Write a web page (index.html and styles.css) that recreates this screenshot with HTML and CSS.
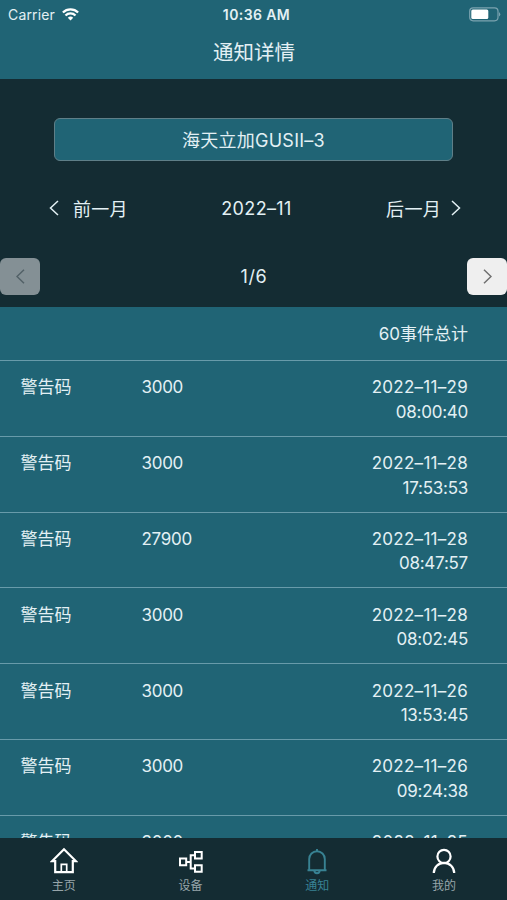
FILE: index.html
```html
<!DOCTYPE html>
<html lang="zh-CN">
<head>
<meta charset="utf-8">
<title>通知详情</title>
<link rel="stylesheet" href="styles.css">
</head>
<body>
<div class="app">
  <header class="header">
    <div class="status">
      <div class="carrier"><span class="carrier-name">Carrier</span>
        <svg width="17" height="13" viewBox="0 0 17 13" fill="none" stroke="#fff" stroke-width="2.3"><path d="M.9 4.5a10.8 10.8 0 0 1 15.2 0M3.5 7.5a7 7 0 0 1 10 0"/><path d="M8.5 12.5 5.8 9.8a3.8 3.8 0 0 1 5.4 0z" fill="#fff" stroke="none"/></svg>
      </div>
      <span class="time">10:36 AM</span>
      <svg class="battery" width="32" height="15" viewBox="0 0 32 15"><rect x=".7" y=".8" width="28.3" height="13" rx="3.5" fill="none" stroke="#7ba3b0" stroke-width="1.2"/><rect x="2.3" y="2.5" width="17" height="9.6" rx="1.5" fill="#fff"/><path d="M30 5q2.6 2.3 0 4.6z" fill="#7ba3b0"/></svg>
    </div>
    <h1 class="title">通知详情</h1>
  </header>
  <section class="controls">
    <div class="device">海天立加GUSII–3</div>
    <div class="months">
      <span class="month prev"><svg width="10" height="16" viewBox="0 0 10 16"><path d="M9 1 1.5 8 9 15"/></svg><span>前一月</span></span>
      <span class="current">2022–11</span>
      <span class="month next"><span>后一月</span><svg width="10" height="16" viewBox="0 0 10 16"><path d="M1 1 8.5 8 1 15"/></svg></span>
    </div>
    <div class="pager">
      <span class="page-btn disabled"><svg width="9" height="15" viewBox="0 0 9 15"><path d="M8 .8 1 7.5 8 14.2"/></svg></span>
      <span class="page">1/6</span>
      <span class="page-btn"><svg width="9" height="15" viewBox="0 0 9 15"><path d="M1 .8 8 7.5 1 14.2"/></svg></span>
    </div>
  </section>
  <main class="list">
    <div class="total"><span>60事件总计</span></div>
    <div class="row"><span>警告码</span><span class="code">3000</span><span class="when"><span class="date">2022–11–29</span><span class="clock">08:00:40</span></span></div>
    <div class="row"><span>警告码</span><span class="code">3000</span><span class="when"><span class="date">2022–11–28</span><span class="clock">17:53:53</span></span></div>
    <div class="row"><span>警告码</span><span class="code">27900</span><span class="when"><span class="date">2022–11–28</span><span class="clock">08:47:57</span></span></div>
    <div class="row"><span>警告码</span><span class="code">3000</span><span class="when"><span class="date">2022–11–28</span><span class="clock">08:02:45</span></span></div>
    <div class="row"><span>警告码</span><span class="code">3000</span><span class="when"><span class="date">2022–11–26</span><span class="clock">13:53:45</span></span></div>
    <div class="row"><span>警告码</span><span class="code">3000</span><span class="when"><span class="date">2022–11–26</span><span class="clock">09:24:38</span></span></div>
    <div class="row"><span>警告码</span><span class="code">3000</span><span class="when"><span class="date">2022–11–25</span></span></div>
  </main>
  <nav class="tabs">
    <div class="tab"><svg width="28" height="28" viewBox="0 0 28 28"><path d="M2 14.2 14 2.3l12 11.9h-3.2v11H5.2v-11z"/><path d="M11.3 25v-7.7h5.4V25" stroke-width="1.7"/></svg><span>主页</span></div>
    <div class="tab"><svg width="28" height="28" viewBox="0 0 28 28"><path d="M3 11.5h6.2v6.8H3zM18 5h6.7v6.5H18zM18 18.3h6.7v6.5H18zM9.2 15h4.5M18 8.2h-4.3v13.4H18" stroke-width="2"/></svg><span>设备</span></div>
    <div class="tab active"><svg width="28" height="28" viewBox="0 0 28 28"><path d="M14 2v2.2M4.5 23.2h19M6.2 23V12a7.8 7.8 0 0 1 15.6 0v11M11.3 23.5a2.7 2.7 0 0 0 5.4 0" stroke-width="1.9"/></svg><span>通知</span></div>
    <div class="tab"><svg width="28" height="28" viewBox="0 0 28 28"><circle cx="14" cy="9.5" r="6.6"/><path d="M3.8 26a10.2 10.2 0 0 1 20.4 0"/></svg><span>我的</span></div>
  </nav>
</div>
</body>
</html>
```
FILE: styles.css
```css
* { box-sizing: border-box; }
body { margin: 0; background: #142c33; font-family: Inter, "Noto Sans CJK SC", sans-serif; color: #e3f0f4; }
.app { height: 900px; display: flex; flex-direction: column; overflow: hidden; }
svg { display: block; flex: none; }
.header { height: 79px; background: #206475; flex: none; }
.status { height: 27px; display: grid; grid-template-columns: 1fr auto 1fr; align-items: center; padding: 1px 6px 0 8px; }
.carrier { display: flex; align-items: center; gap: 7px; font-size: 14px; letter-spacing: .15px; }
.time { font-size: 14px; font-weight: 600; letter-spacing: .4px; padding-left: 4px; }
.battery { justify-self: end; }
.title { margin: 0; padding-left: 1px; text-align: center; font-size: 20.5px; line-height: 51px; font-weight: 400; }
.controls { height: 228px; flex: none; padding-top: 39px; font-size: 18px; }
.device { width: 399px; height: 43px; margin-left: 54px; border: 1.5px solid #5f7f88; border-radius: 6px; background: #206475; text-align: center; line-height: 43px; letter-spacing: .25px; }
.months { height: 30px; margin: 32px 46px 0 49px; display: grid; grid-template-columns: 1fr auto 1fr; align-items: center; }
.month { display: flex; align-items: center; letter-spacing: .3px; }
.prev { gap: 14px; }
.next { gap: 10px; justify-content: flex-end; }
.current { letter-spacing: .35px; padding-left: 3px; }
.months svg, .page-btn svg { fill: none; stroke: #e3f0f4; stroke-width: 1.5; }
.pager { height: 37px; margin-top: 35px; display: flex; align-items: center; justify-content: space-between; }
.page { letter-spacing: .6px; padding-left: 1px; }
.page-btn { width: 40px; height: 37px; border-radius: 6px; background: #efefef; display: flex; align-items: center; justify-content: center; }
.page-btn svg { stroke: #707070; }
.disabled { background: #849095; }
.disabled svg { stroke: #526167; }
.list { flex: 1; min-height: 0; overflow: hidden; background: #206475; font-size: 17px; line-height: 24.4px; }
.total { height: 54px; padding: 15px 39px 0 0; text-align: right; border-bottom: 1px solid #689baa; }
.row { height: 75.8px; display: grid; grid-template-columns: 121px 1fr auto; padding: 14.4px 39px 0 20.5px; border-bottom: 1.5px solid #689baa; }
.code { letter-spacing: -.3px; }
.when { display: flex; flex-direction: column; align-items: flex-end; }
.date { letter-spacing: .28px; }
.clock { letter-spacing: -.25px; }
.tabs { height: 62px; flex: none; display: grid; grid-template-columns: repeat(4, 1fr); background: #142c33; }
.tab { display: flex; flex-direction: column; align-items: center; padding: 9px 0 0 1px; gap: 1px; font-size: 12px; line-height: 19px; color: #97a5aa; }
.tab svg { fill: none; stroke: #fff; stroke-width: 2.2; }
.active { color: #388293; }
.tab.active svg { stroke: #388293; }
```
